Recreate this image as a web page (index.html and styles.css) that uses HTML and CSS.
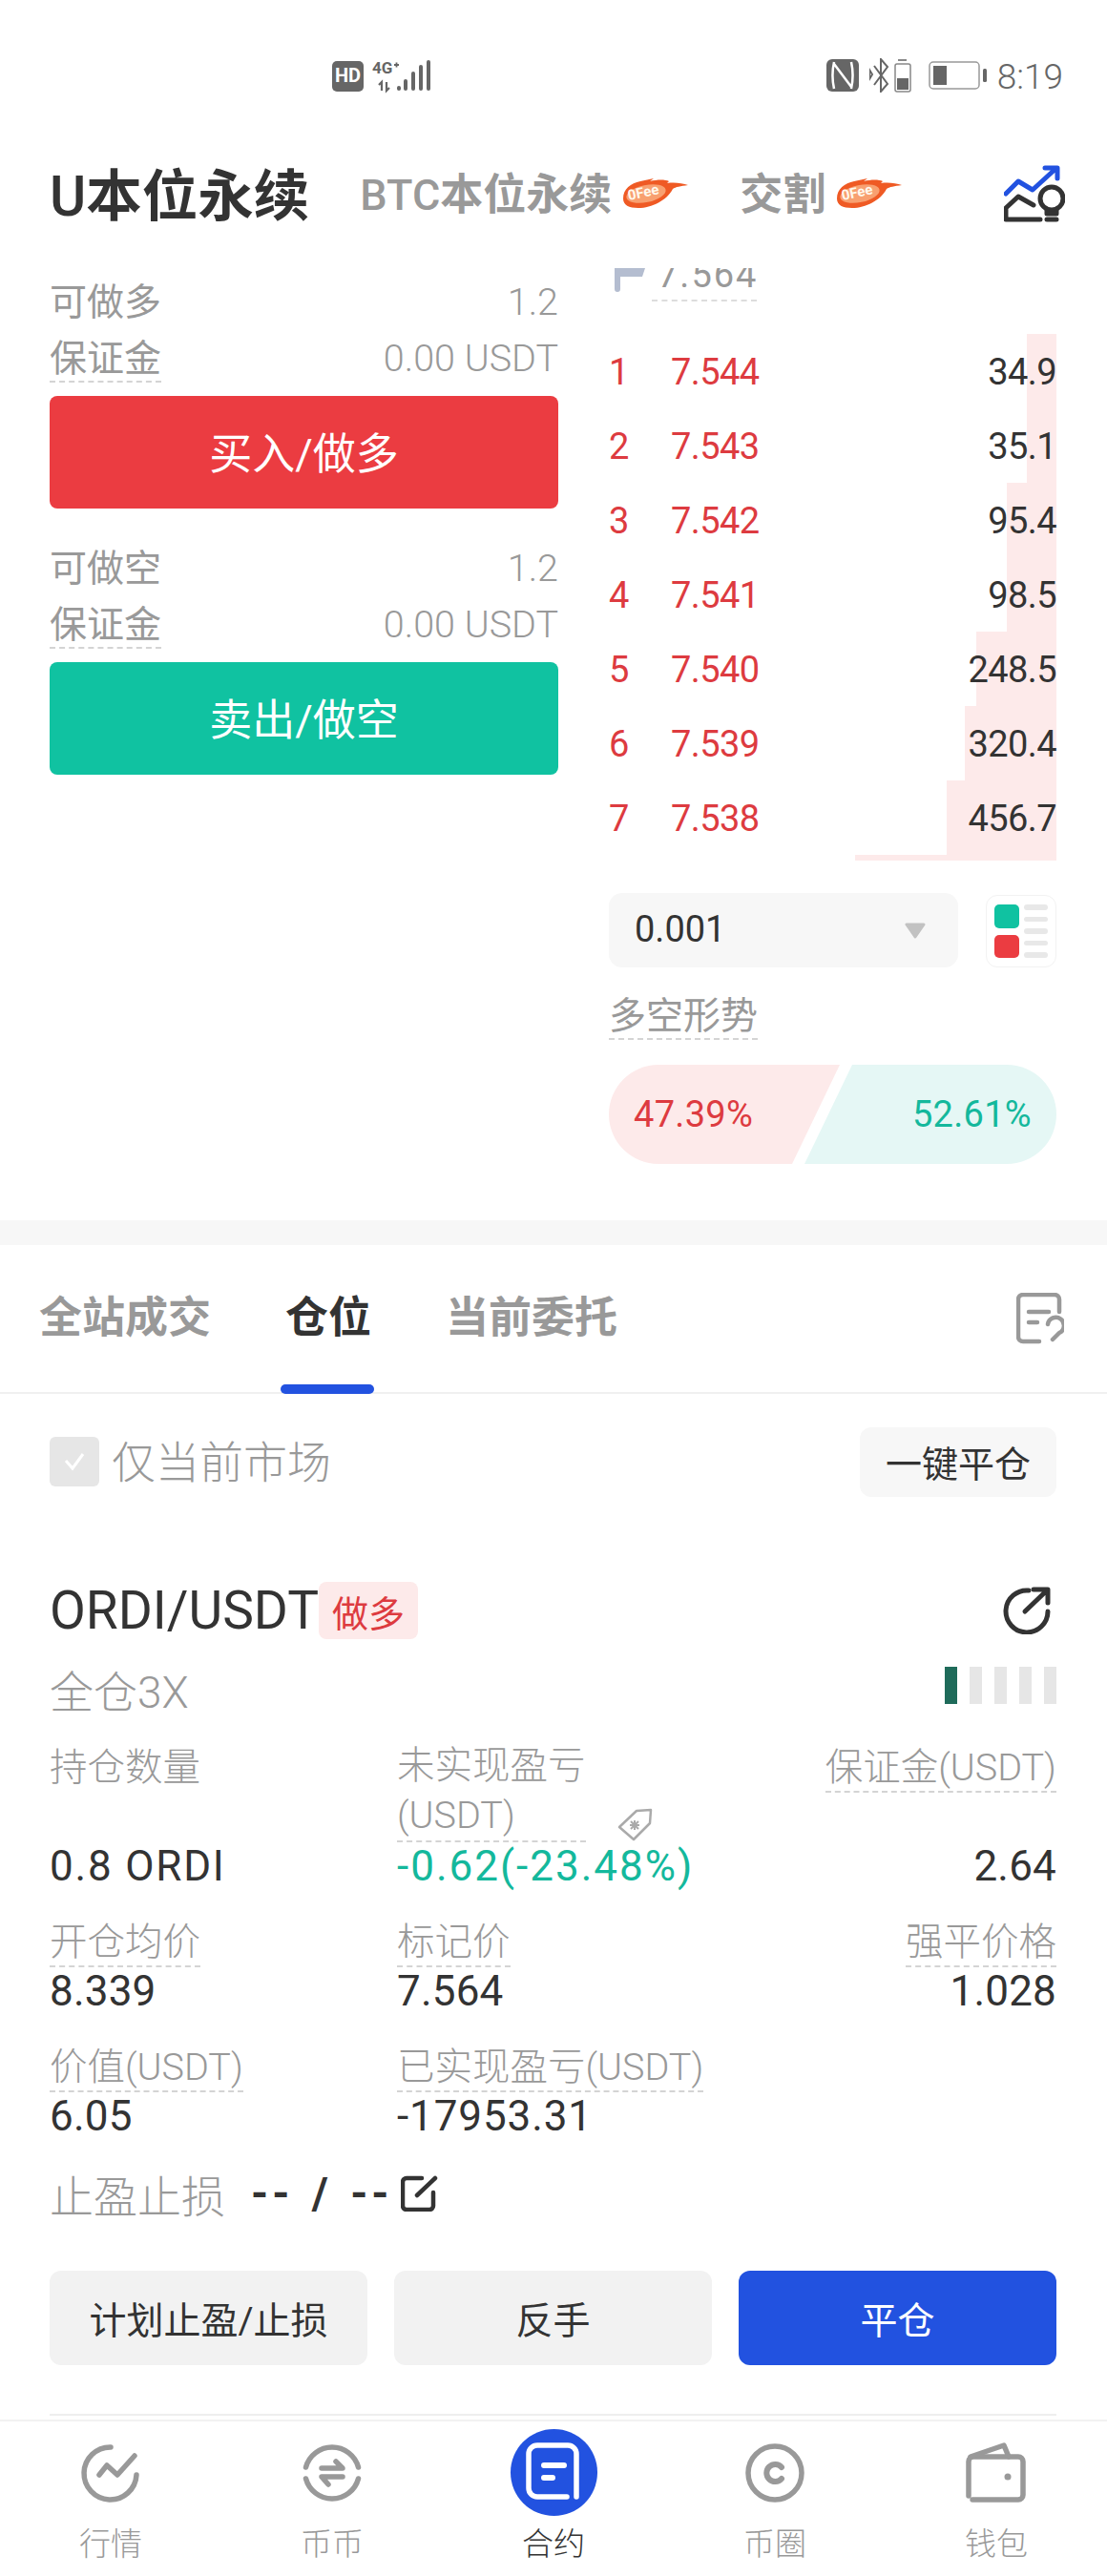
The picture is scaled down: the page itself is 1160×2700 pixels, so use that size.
FILE: index.html
```html
<!DOCTYPE html>
<html lang="en">
<head>
    <meta charset="UTF-8">
    <meta name="viewport" content="width=device-width, initial-scale=1.0">
    <title>U本位永续</title>
    <link rel="stylesheet" href="styles.css">
</head>
<body>
    <div class="status">
        <svg class="status-left" width="104" height="36" viewBox="0 0 104 36">
            <rect x="0" y="2" width="33" height="32" rx="5" fill="#666"/>
            <text class="hd-text" x="16.5" y="24" text-anchor="middle">HD</text>
            <text class="net-text" x="42" y="15">4G</text>
            <path d="M65 6h5M67.5 3.500v5" stroke="#666" stroke-width="1.800" fill="none"/>
            <path d="M52 33v-9l-3 3M57 24v9l3-3" stroke="#666" stroke-width="2.200" fill="none"/>
            <g fill="#666">
                <rect x="68" y="28" width="4" height="5" rx="2"/>
                <rect x="75" y="21" width="4" height="12" rx="2"/>
                <rect x="83" y="13" width="4" height="20" rx="2"/>
                <rect x="91" y="6" width="4" height="27" rx="2"/>
                <rect x="99" y="1" width="4" height="32" rx="2"/>
            </g>
        </svg>
        <div class="status-right">
            <svg width="34" height="34" viewBox="0 0 34 34">
                <rect width="34" height="34" rx="6" fill="#666"/>
                <path d="M8 3C6 12 6 22 8 31M8 5L26 29M26 3C28 12 28 22 26 31" stroke="#fff" stroke-width="2.500" fill="none"/>
            </svg>
            <svg class="bt-icon" width="44" height="36" viewBox="0 0 44 36">
                <path d="M0 12l3 5-3 5zM5 8l14 19-7 8V1l7 8L5 28" fill="none" stroke="#666" stroke-width="2"/>
                <rect x="27" y="6" width="16" height="29" rx="2" fill="none" stroke="#888" stroke-width="1.500"/>
                <rect x="30" y="1" width="9" height="2" fill="#888"/>
                <rect x="29" y="21" width="12" height="12" fill="#666"/>
            </svg>
            <svg class="batt-icon" width="62" height="30" viewBox="0 0 62 30">
                <rect x="1" y="1" width="52" height="28" rx="4" fill="none" stroke="#999" stroke-width="1.500"/>
                <rect x="5" y="5" width="14" height="20" fill="#666"/>
                <rect x="57" y="8" width="4" height="14" rx="1.500" fill="#666"/>
            </svg>
            <span class="clock">8:19</span>
        </div>
    </div>

    <div class="head">
        <div class="head-title"><span class="latin">U</span>本位永续</div>
        <div class="head-tab first"><span class="latin">BTC</span>本位永续</div>
        <svg class="fee" width="68" height="31" viewBox="0 0 68 31">
            <path fill="#ef5a24" d="M0 21C0 11 8 5 18 3L32 0L28 3C36 1 44 1 48 3L46 5C54 4 62 5 68 7C60 8 55 9 52 11C46 23 30 31 16 31C6 31 0 28 0 21Z"/>
            <ellipse fill="#f8a070" cx="24" cy="16" rx="21" ry="9" transform="rotate(-12 24 16)"/>
            <text class="flame-text" x="6" y="23" transform="rotate(-12 6 23)">0Fee</text>
        </svg>
        <div class="head-tab second">交割</div>
        <svg class="fee" width="68" height="31" viewBox="0 0 68 31">
            <path fill="#ef5a24" d="M0 21C0 11 8 5 18 3L32 0L28 3C36 1 44 1 48 3L46 5C54 4 62 5 68 7C60 8 55 9 52 11C46 23 30 31 16 31C6 31 0 28 0 21Z"/>
            <ellipse fill="#f8a070" cx="24" cy="16" rx="21" ry="9" transform="rotate(-12 24 16)"/>
            <text class="flame-text" x="6" y="23" transform="rotate(-12 6 23)">0Fee</text>
        </svg>
        <svg class="head-icon" width="64" height="60" viewBox="0 0 64 60" fill="none" stroke-linecap="round" stroke-linejoin="round">
            <path d="M2 30L15 17L30 26L53 5M43 3H56V14" stroke="#2252e0" stroke-width="5"/>
            <path d="M38 57H2V45L15 33L31 42" stroke="#333" stroke-width="5"/>
            <circle cx="50" cy="35" r="12" stroke="#333" stroke-width="5"/>
            <path d="M45 46V51H55V46M45 57H55" stroke="#333" stroke-width="5"/>
        </svg>
    </div>

    <div class="trade">
        <div class="trade-left">
            <div class="info-row top">
                <span>可做多</span>
                <span class="info-val">1.2</span>
            </div>
            <div class="info-row">
                <span class="dash">保证金</span>
                <span class="info-val">0.00 USDT</span>
            </div>
            <div class="big-btn buy">买入/做多</div>

            <div class="info-row top second-block">
                <span>可做空</span>
                <span class="info-val">1.2</span>
            </div>
            <div class="info-row">
                <span class="dash">保证金</span>
                <span class="info-val">0.00 USDT</span>
            </div>
            <div class="big-btn sell">卖出/做空</div>
        </div>

        <div class="trade-right">
            <div class="mark-row">
                <svg class="mark-flag" width="32" height="25" viewBox="0 0 32 25">
                    <path d="M0 0H32L29 9H6V22a3 3 0 0 1-6 0Z" fill="#b4bdd0"/>
                </svg>
                <div class="mark-price">7.564</div>
            </div>

            <div class="book">
                <div class="book-row">
                    <div class="book-bar" style="width: 31px"></div>
                    <span class="book-idx">1</span><span class="book-price">7.544</span><span class="book-qty">34.9</span>
                </div>
                <div class="book-row">
                    <div class="book-bar" style="width: 31px"></div>
                    <span class="book-idx">2</span><span class="book-price">7.543</span><span class="book-qty">35.1</span>
                </div>
                <div class="book-row">
                    <div class="book-bar" style="width: 52px"></div>
                    <span class="book-idx">3</span><span class="book-price">7.542</span><span class="book-qty">95.4</span>
                </div>
                <div class="book-row">
                    <div class="book-bar" style="width: 52px"></div>
                    <span class="book-idx">4</span><span class="book-price">7.541</span><span class="book-qty">98.5</span>
                </div>
                <div class="book-row">
                    <div class="book-bar" style="width: 84px"></div>
                    <span class="book-idx">5</span><span class="book-price">7.540</span><span class="book-qty">248.5</span>
                </div>
                <div class="book-row">
                    <div class="book-bar" style="width: 96px"></div>
                    <span class="book-idx">6</span><span class="book-price">7.539</span><span class="book-qty">320.4</span>
                </div>
                <div class="book-row">
                    <div class="book-bar" style="width: 115px"></div>
                    <span class="book-idx">7</span><span class="book-price">7.538</span><span class="book-qty">456.7</span>
                </div>
                <div class="book-sliver"></div>
            </div>

            <div class="depth-row">
                <div class="depth-select">
                    <span>0.001</span>
                    <svg width="24" height="17" viewBox="0 0 24 17"><path d="M3 2H21L12 15Z" fill="#c2c2c2" stroke="#c2c2c2" stroke-width="3" stroke-linejoin="round"/></svg>
                </div>
                <div class="layout-btn">
                    <div class="layout-squares">
                        <div class="sq green"></div>
                        <div class="sq red"></div>
                    </div>
                    <div class="layout-lines">
                        <i></i><i></i><i></i><i></i><i></i>
                    </div>
                </div>
            </div>

            <div class="ratio-title"><span class="dash">多空形势</span></div>
            <div class="ratio">
                <div class="ratio-long">47.39%</div>
                <div class="ratio-short">52.61%</div>
            </div>
        </div>
    </div>

    <div class="band"></div>

    <div class="tabs">
        <div class="tab">全站成交</div>
        <div class="tab active">仓位</div>
        <div class="tab">当前委托</div>
        <svg class="tabs-icon" width="50" height="54" viewBox="0 0 50 54" fill="none" stroke="#999" stroke-width="4.500" stroke-linecap="round" stroke-linejoin="round">
            <path d="M24 51H7a5 5 0 0 1-5-5V7a5 5 0 0 1 5-5H40a5 5 0 0 1 5 5V20"/>
            <path d="M13 20H34M13 31H22"/>
            <path d="M33 33a8.500 8.500 0 1 1 12 9L38 49"/>
        </svg>
    </div>

    <div class="filter">
        <div class="check">
            <svg width="24" height="20" viewBox="0 0 24 20"><path d="M3 9L10 17L21 2" fill="none" stroke="#fff" stroke-width="3"/></svg>
        </div>
        <div class="filter-label">仅当前市场</div>
        <div class="close-all">一键平仓</div>
    </div>

    <div class="pos">
        <div class="pos-head">
            <div class="pos-symbol">ORDI/USDT</div>
            <div class="pos-tag">做多</div>
            <svg class="pos-share" width="52" height="50" viewBox="0 0 52 50" fill="none" stroke="#333" stroke-width="5" stroke-linecap="round" stroke-linejoin="round">
                <path d="M28 4A22 22 0 1 0 48 26"/>
                <path d="M24 26L47 4M33 3H48V17"/>
            </svg>
        </div>
        <div class="pos-sub">
            <div class="pos-mode">全仓3X</div>
            <div class="adl">
                <i class="on"></i><i></i><i></i><i></i><i></i>
            </div>
        </div>

        <div class="grid">
            <div class="cell">
                <div class="cell-label">持仓数量</div>
                <div class="cell-value spaced">0.8 ORDI</div>
            </div>
            <div class="cell">
                <div class="cell-wrap">
                    <div class="cell-label two-line dash">未实现盈亏<br>(USDT)</div>
                    <svg class="tag-icon" width="37" height="35" viewBox="0 0 37 35" fill="none" stroke="#aaa" stroke-width="2.500" stroke-linejoin="round">
                        <path d="M2 20L20 3L35 2L34 16L17 33Z"/>
                        <path d="M13 18L23 18M18 13L18 23M14 14L22 22M22 14L14 22" stroke-width="2"/>
                    </svg>
                </div>
                <div class="cell-value green-text">-0.62(-23.48%)</div>
            </div>
            <div class="cell right">
                <div class="cell-label dash">保证金(USDT)</div>
                <div class="cell-value">2.64</div>
            </div>

            <div class="cell">
                <div class="cell-label dash">开仓均价</div>
                <div class="cell-value">8.339</div>
            </div>
            <div class="cell">
                <div class="cell-label dash">标记价</div>
                <div class="cell-value">7.564</div>
            </div>
            <div class="cell right">
                <div class="cell-label dash">强平价格</div>
                <div class="cell-value">1.028</div>
            </div>

            <div class="cell">
                <div class="cell-label dash">价值(USDT)</div>
                <div class="cell-value">6.05</div>
            </div>
            <div class="cell wide">
                <div class="cell-label dash">已实现盈亏(USDT)</div>
                <div class="cell-value long-num">-17953.31</div>
            </div>
        </div>

        <div class="tpsl">
            <span class="tpsl-label">止盈止损</span>
            <span class="tpsl-value">-- / --</span>
            <svg width="39" height="38" viewBox="0 0 39 38" fill="none" stroke="#333" stroke-width="4.500" stroke-linecap="round" stroke-linejoin="round">
                <path d="M22 3H6a4 4 0 0 0-4 4V32a4 4 0 0 0 4 4H30a4 4 0 0 0 4-4V18"/>
                <path d="M17 21L36 3"/>
            </svg>
        </div>

        <div class="actions">
            <div class="action">计划止盈/止损</div>
            <div class="action">反手</div>
            <div class="action primary">平仓</div>
        </div>

        <div class="pos-line"></div>
    </div>

    <div class="nav">
        <div class="nav-item">
            <div class="nav-icon">
                <svg width="64" height="64" viewBox="0 0 64 64" fill="none" stroke="#999" stroke-width="5.500" stroke-linecap="round" stroke-linejoin="round">
                    <path d="M32 5A27.500 27.500 0 1 0 59 34"/>
                    <path d="M20 34L28 24L39 34L57 14"/>
                </svg>
            </div>
            <span>行情</span>
        </div>
        <div class="nav-item">
            <div class="nav-icon">
                <svg width="64" height="64" viewBox="0 0 64 64" fill="none" stroke="#999" stroke-width="5.500" stroke-linecap="round" stroke-linejoin="round">
                    <path d="M4.500 26A28.500 28.500 0 0 1 59.500 26M4.500 38A28.500 28.500 0 0 0 59.500 38"/>
                    <path d="M21 27H43L36 20M43 36H21L28 44"/>
                </svg>
            </div>
            <span>币币</span>
        </div>
        <div class="nav-item active">
            <div class="nav-icon">
                <div class="nav-disc">
                    <svg width="91" height="91" viewBox="0 0 91 91" fill="none" stroke="#fff" stroke-linecap="round" stroke-linejoin="round">
                        <path d="M59 71H28a9 9 0 0 1-9-9V26a9 9 0 0 1 9-9H60a9 9 0 0 1 9 9V71" stroke-width="5.500"/>
                        <path d="M35 38H56M35 51H44" stroke-width="6"/>
                    </svg>
                </div>
            </div>
            <span>合约</span>
        </div>
        <div class="nav-item">
            <div class="nav-icon">
                <svg width="64" height="64" viewBox="0 0 64 64" fill="none" stroke="#999" stroke-linecap="round">
                    <circle cx="32" cy="32" r="28" stroke-width="5.500"/>
                    <path d="M39 26A9 9 0 1 0 39 38" stroke-width="6"/>
                </svg>
            </div>
            <span>币圈</span>
        </div>
        <div class="nav-item">
            <div class="nav-icon">
                <svg width="64" height="64" viewBox="0 0 64 64" fill="none" stroke="#999" stroke-width="5.500" stroke-linecap="round" stroke-linejoin="round">
                    <path d="M7 60H55a5 5 0 0 0 5-5V20a5 5 0 0 0-5-5H8a5 5 0 0 0-5 5V56"/>
                    <path d="M5 15L40 3L45 15"/>
                    <circle cx="44" cy="36" r="3.500" fill="#999" stroke="none"/>
                </svg>
            </div>
            <span>钱包</span>
        </div>
    </div>
</body>
</html>
```

FILE: styles.css
```css
* {
    box-sizing: border-box;
}
body {
    margin: 0;
    width: 1160px;
    height: 2700px;
    overflow: hidden;
    background: #fff;
    color: #333;
    font-family: Roboto, "Noto Sans CJK SC", sans-serif;
}
.flame-text {
    font: bold 15px Roboto, sans-serif;
    fill: #fff8ec;
}
.dash {
    border-bottom: 2px dashed #d4d4d4;
}
.latin {
    font-weight: 500;
}

/* status bar */
.status {
    height: 130px;
    padding: 62px 46px 0 348px;
    display: flex;
    align-items: flex-start;
    justify-content: space-between;
}
.hd-text {
    font: bold 20px Roboto, sans-serif;
    fill: #fff;
}
.net-text {
    font: bold 17px Roboto, sans-serif;
    fill: #666;
}
.status-right {
    display: flex;
    align-items: center;
    height: 34px;
}
.bt-icon {
    margin-left: 11px;
}
.batt-icon {
    margin-left: 18px;
}
.clock {
    margin: 2px 0 0 10px;
    font-size: 37px;
    font-weight: 300;
    color: #666;
}

/* top tabs */
.head {
    height: 151px;
    padding: 0 44px 10px 52px;
    display: flex;
    align-items: center;
}
.head-title {
    font-size: 58.500px;
    font-weight: 700;
    color: #333;
    white-space: nowrap;
}
.head-tab {
    font-size: 45px;
    font-weight: 700;
    color: #999;
    white-space: nowrap;
}
.head-tab.first {
    margin-left: 53px;
}
.head-tab.second {
    margin-left: 54px;
}
.fee {
    margin: 3px 0 0 12px;
}
.head-icon {
    margin: 5px 0 0 auto;
}

/* trade area */
.trade {
    height: 998px;
    padding: 0 53px 0 52px;
    display: flex;
    justify-content: space-between;
}
.trade-left {
    width: 533px;
}
.trade-right {
    width: 469px;
}
.info-row {
    height: 48px;
    margin-top: 11px;
    display: flex;
    justify-content: space-between;
    align-items: flex-start;
    font-size: 39px;
    line-height: 46px;
    color: #999;
}
.info-row.top {
    margin-top: 13px;
}
.info-row.second-block {
    margin-top: 40px;
}
.info-val {
    font-size: 39.500px;
    font-weight: 300;
}
.big-btn {
    height: 118px;
    margin-top: 14px;
    padding-bottom: 4px;
    border-radius: 8px;
    display: flex;
    align-items: center;
    justify-content: center;
    font-size: 45px;
    color: #fff;
}
.buy {
    background: #eb3c41;
}
.sell {
    background: #10c2a1;
}

.mark-row {
    height: 35px;
    overflow: hidden;
    display: flex;
    align-items: flex-start;
}
.mark-flag {
    margin-left: 6px;
}
.mark-price {
    width: 110px;
    height: 35px;
    margin-left: 7px;
    padding: 0 0 6px 6px;
    border-bottom: 2px dashed #ddd;
    font-size: 38px;
    line-height: 40px;
    color: #999;
    display: flex;
    align-items: flex-end;
    letter-spacing: 2px;
}

/* order book */
.book {
    margin-top: 34px;
}
.book-row {
    height: 78px;
    padding-top: 2px;
    position: relative;
    display: flex;
    align-items: center;
    font-size: 38px;
    letter-spacing: -0.6px;
}
.book-bar {
    position: absolute;
    top: 0;
    right: 0;
    bottom: 0;
    background: #fdeaea;
}
.book-idx,
.book-price,
.book-qty {
    position: relative;
}
.book-idx {
    width: 65px;
    color: #dd3b40;
}
.book-price {
    color: #dd3b40;
}
.book-qty {
    margin-left: auto;
    color: #333;
}
.book-sliver {
    width: 211px;
    height: 6px;
    margin-left: auto;
    background: #fdeaea;
}
.depth-row {
    margin-top: 34px;
    display: flex;
    justify-content: space-between;
    align-items: flex-end;
}
.depth-select {
    width: 366px;
    height: 78px;
    padding: 0 33px 3px 27px;
    background: #f7f7f7;
    border-radius: 14px;
    display: flex;
    align-items: center;
    justify-content: space-between;
    font-size: 38px;
}
.depth-select svg {
    margin-top: 3px;
}
.layout-btn {
    width: 74px;
    height: 76px;
    padding: 9px 8px;
    border: 1px solid #f2f2f2;
    border-radius: 12px;
    display: flex;
    justify-content: space-between;
}
.layout-squares {
    width: 26px;
    display: flex;
    flex-direction: column;
    gap: 7px;
}
.sq {
    height: 25px;
    border-radius: 5px;
}
.sq.green {
    background: #10c2a1;
}
.sq.red {
    background: #eb3c41;
}
.layout-lines {
    width: 25px;
    display: flex;
    flex-direction: column;
    gap: 7px;
}
.layout-lines i {
    display: block;
    height: 6px;
    border-radius: 3px;
    background: #e8e8e8;
}
.ratio-title {
    margin-top: 28px;
    height: 48px;
    font-size: 39px;
    line-height: 46px;
    color: #999;
}
.ratio-title .dash {
    display: inline-block;
}
.ratio {
    margin-top: 26px;
    height: 104px;
    display: flex;
    font-size: 38px;
    letter-spacing: 0.3px;
}
.ratio-long,
.ratio-short {
    height: 104px;
    display: flex;
    align-items: center;
}
.ratio-long {
    width: 242px;
    padding-left: 26px;
    color: #dd3b40;
    background: #fdeaea;
    border-radius: 52px 0 0 52px;
    clip-path: polygon(0 0, 100% 0, calc(100% - 50px) 100%, 0 100%);
}
.ratio-short {
    width: 264px;
    margin-left: -37px;
    padding-right: 26px;
    justify-content: flex-end;
    color: #14b89c;
    background: #e5f7f5;
    border-radius: 0 52px 52px 0;
    clip-path: polygon(50px 0, 100% 0, 100% 100%, 0 100%);
}

.band {
    height: 26px;
    background: #f7f7f7;
}

/* position tabs */
.tabs {
    height: 156px;
    padding: 0 45px 0 41px;
    border-bottom: 2px solid #f0f0f0;
    display: flex;
    align-items: flex-start;
    gap: 78px;
    font-size: 45px;
    font-weight: 700;
    color: #999;
}
.tab {
    position: relative;
    padding-top: 47px;
    height: 156px;
    line-height: 60px;
    white-space: nowrap;
}
.tab.active {
    color: #333;
}
.tab.active::after {
    content: "";
    position: absolute;
    left: -5px;
    right: -3px;
    bottom: 0;
    height: 10px;
    border-radius: 5px;
    background: #2252e0;
}
.tabs-icon {
    margin: 50px 0 0 auto;
}

.filter {
    height: 108px;
    padding: 35px 53px 0 52px;
    display: flex;
    align-items: flex-start;
}
.check {
    width: 52px;
    height: 52px;
    margin-top: 10px;
    border-radius: 6px;
    background: #e6e6e6;
    display: flex;
    align-items: center;
    justify-content: center;
}
.filter-label {
    margin: 7px 0 0 13px;
    font-size: 46px;
    line-height: 60px;
    font-weight: 300;
    color: #999;
}
.close-all {
    width: 206px;
    height: 73px;
    margin-left: auto;
    padding-bottom: 2px;
    background: #f7f7f7;
    border-radius: 12px;
    display: flex;
    align-items: center;
    justify-content: center;
    font-size: 38px;
}

/* position card */
.pos {
    padding: 89px 53px 0 52px;
}
.pos-head {
    height: 60px;
    display: flex;
    align-items: center;
}
.pos-symbol {
    font-size: 55px;
}
.pos-tag {
    width: 104px;
    height: 60px;
    background: #fdeaea;
    border-radius: 8px;
    display: flex;
    align-items: center;
    justify-content: center;
    font-size: 38px;
    color: #dd3b40;
}
.pos-share {
    margin: 0 5px 0 auto;
}
.pos-sub {
    height: 52px;
    margin-top: 29px;
    display: flex;
    justify-content: space-between;
    align-items: flex-start;
}
.pos-mode {
    padding-top: 1px;
    font-size: 46px;
    line-height: 52px;
    font-weight: 300;
    color: #999;
}
.adl {
    display: flex;
    gap: 13px;
}
.adl i {
    display: block;
    width: 13px;
    height: 39px;
    background: #e6e6e6;
}
.adl i.on {
    background: #1f6b5a;
}
.grid {
    margin-top: 26px;
    display: grid;
    grid-template-columns: 364px 1fr auto;
    row-gap: 27px;
}
.cell {
    display: flex;
    flex-direction: column;
    justify-content: space-between;
    align-items: flex-start;
}
.cell.right {
    align-items: flex-end;
}
.cell.wide {
    grid-column: span 2;
}
.cell-wrap {
    display: flex;
    align-items: flex-end;
}
.cell-label {
    padding-top: 4px;
    font-size: 39.500px;
    line-height: 48px;
    font-weight: 300;
    color: #999;
    white-space: nowrap;
}
.cell-label.two-line {
    padding-top: 0;
    line-height: 52px;
}
.tag-icon {
    margin: 0 0 1px 33px;
}
.cell-value {
    font-size: 44px;
    line-height: 50px;
    letter-spacing: 0.2px;
    white-space: nowrap;
}
.cell-value.spaced {
    letter-spacing: 1.8px;
}
.cell-value.long-num {
    letter-spacing: 0.9px;
}
.green-text {
    color: #14b89c;
    letter-spacing: 2px;
}
.tpsl {
    height: 52px;
    margin-top: 30px;
    display: flex;
    align-items: center;
}
.tpsl-label {
    font-size: 46px;
    font-weight: 300;
    color: #999;
}
.tpsl-value {
    margin-left: 27px;
    font-size: 46px;
    line-height: 52px;
    font-weight: 700;
    letter-spacing: 4px;
    word-spacing: 4px;
}
.tpsl svg {
    margin-left: 9px;
}
.actions {
    margin-top: 55px;
    display: flex;
    gap: 28px;
}
.action {
    flex: 1;
    height: 99px;
    padding-bottom: 2px;
    background: #f2f2f2;
    border-radius: 12px;
    display: flex;
    align-items: center;
    justify-content: center;
    font-size: 39px;
}
.action.primary {
    background: #2252e0;
    color: #fff;
}
.pos-line {
    height: 2px;
    margin-top: 51px;
    background: #eee;
}

/* bottom nav */
.nav {
    margin-top: 4px;
    height: 163px;
    border-top: 2px solid #f2f2f2;
    display: flex;
}
.nav-item {
    width: 232px;
    display: flex;
    flex-direction: column;
    align-items: center;
    font-size: 33px;
    font-weight: 300;
    color: #999;
}
.nav-item.active {
    color: #333;
}
.nav-icon {
    height: 91px;
    margin-top: 8px;
    display: flex;
    align-items: center;
}
.nav-item span {
    margin-top: 10px;
    line-height: 40px;
}
.nav-disc {
    width: 91px;
    height: 91px;
    border-radius: 50%;
    background: #2252e0;
}
```
